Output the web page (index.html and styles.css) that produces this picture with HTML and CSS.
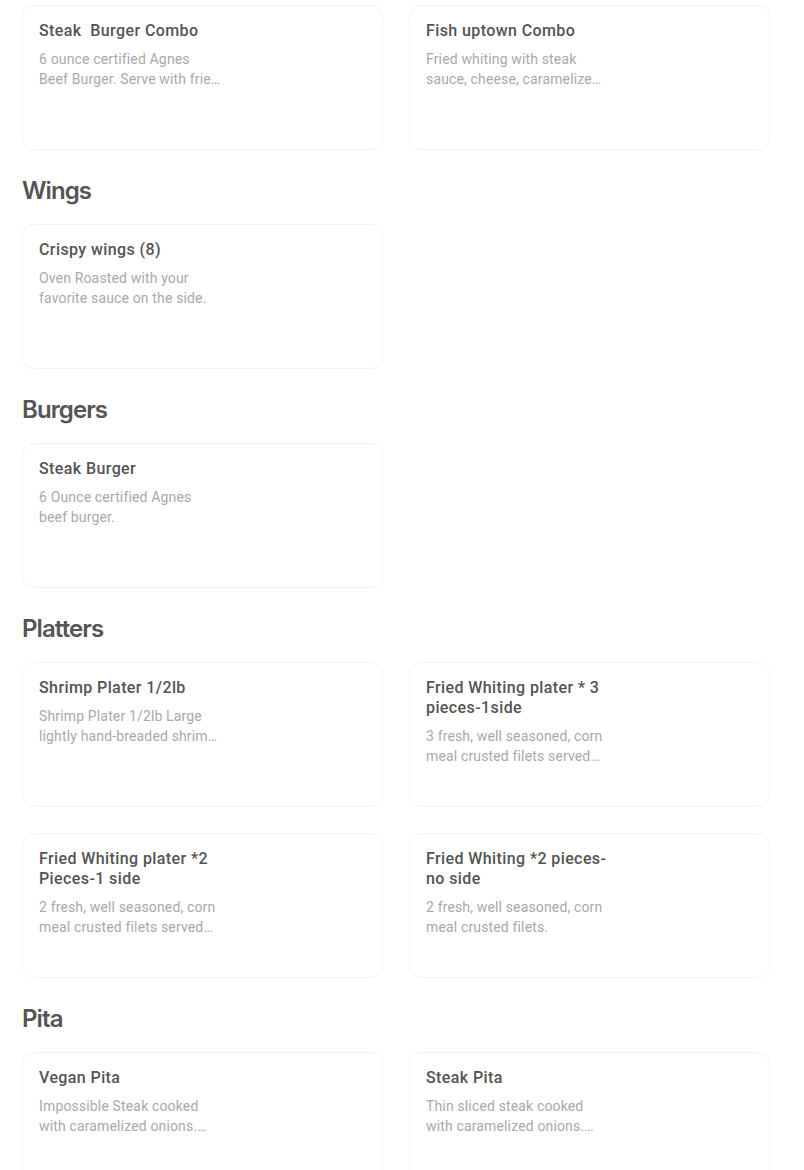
FILE: index.html
```html
<!DOCTYPE html>
<html lang="en">
<head>
<meta charset="utf-8">
<title>Menu</title>
<link rel="stylesheet" href="styles.css">
</head>
<body>
<main class="menu">
  <section class="section first">
    <div class="grid">
      <div class="card">
        <div class="info">
          <div class="title">Steak&nbsp; Burger Combo</div>
          <div class="desc">6 ounce certified Agnes<br>Beef Burger. Serve with frie…</div>
        </div>
      </div>
      <div class="card">
        <div class="info">
          <div class="title">Fish uptown Combo</div>
          <div class="desc">Fried whiting with steak<br>sauce, cheese, caramelize…</div>
        </div>
      </div>
    </div>
  </section>

  <section class="section">
    <h2 class="heading">Wings</h2>
    <div class="grid">
      <div class="card">
        <div class="info">
          <div class="title">Crispy wings (8)</div>
          <div class="desc">Oven Roasted with your<br>favorite sauce on the side.</div>
        </div>
      </div>
    </div>
  </section>

  <section class="section">
    <h2 class="heading">Burgers</h2>
    <div class="grid">
      <div class="card">
        <div class="info">
          <div class="title">Steak Burger</div>
          <div class="desc">6 Ounce certified Agnes<br>beef burger.</div>
        </div>
      </div>
    </div>
  </section>

  <section class="section">
    <h2 class="heading">Platters</h2>
    <div class="grid">
      <div class="card">
        <div class="info">
          <div class="title">Shrimp Plater 1/2lb</div>
          <div class="desc">Shrimp Plater 1/2lb Large<br>lightly hand-breaded shrim…</div>
        </div>
      </div>
      <div class="card">
        <div class="info">
          <div class="title">Fried Whiting plater * 3<br>pieces-1side</div>
          <div class="desc">3 fresh, well seasoned, corn<br>meal crusted filets served…</div>
        </div>
      </div>
      <div class="card">
        <div class="info">
          <div class="title">Fried Whiting plater *2<br>Pieces-1 side</div>
          <div class="desc">2 fresh, well seasoned, corn<br>meal crusted filets served…</div>
        </div>
      </div>
      <div class="card">
        <div class="info">
          <div class="title">Fried Whiting *2 pieces-<br>no side</div>
          <div class="desc">2 fresh, well seasoned, corn<br>meal crusted filets.</div>
        </div>
      </div>
    </div>
  </section>

  <section class="section">
    <h2 class="heading">Pita</h2>
    <div class="grid">
      <div class="card">
        <div class="info">
          <div class="title">Vegan Pita</div>
          <div class="desc">Impossible Steak cooked<br>with caramelized onions.…</div>
        </div>
      </div>
      <div class="card">
        <div class="info">
          <div class="title">Steak Pita</div>
          <div class="desc">Thin sliced steak cooked<br>with caramelized onions.…</div>
        </div>
      </div>
    </div>
  </section>
</main>
</body>
</html>
```

FILE: styles.css
```css
html, body {
  margin: 0;
  padding: 0;
  background: #ffffff;
}

body {
  font-family: "Roboto", "Liberation Sans", sans-serif;
  color: #545454;
}

.menu {
  width: 748px;
  padding: 5px 0 0 22px;
}

.section {
  display: flex;
  flex-direction: column;
}

.heading {
  margin: 25px 0 17px 0;
  font-family: "Inter", "Roboto", sans-serif;
  font-size: 24px;
  line-height: 32px;
  font-weight: 600;
  color: #555555;
  letter-spacing: -0.9px;
}

.grid {
  display: grid;
  grid-template-columns: 361px 361px;
  column-gap: 26px;
  row-gap: 26px;
}

.card {
  box-sizing: border-box;
  height: 145px;
  border: 1px solid #f3f3f3;
  border-radius: 12px;
  padding: 15px 16px 14px;
}

.info {
  width: 200px;
}

.title {
  font-size: 16px;
  line-height: 20px;
  font-weight: 500;
  color: #545454;
  letter-spacing: 0.4px;
}

.desc {
  margin-top: 8px;
  font-size: 14px;
  line-height: 20px;
  font-weight: 400;
  color: #a9a9a9;
  letter-spacing: 0.15px;
  white-space: nowrap;
}
```
